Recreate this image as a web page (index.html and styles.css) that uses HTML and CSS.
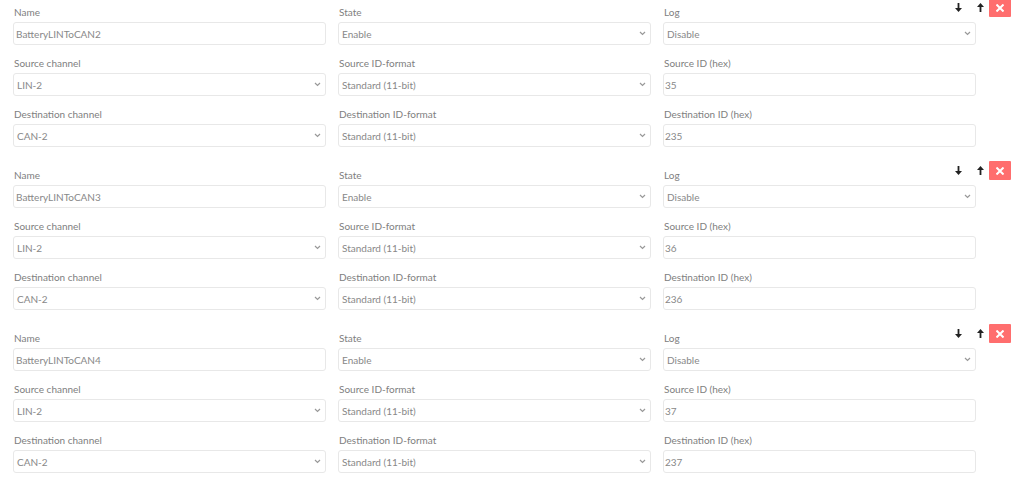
FILE: index.html
```html
<!DOCTYPE html>
<html>
<head>
<meta charset="utf-8">
<link rel="stylesheet" href="styles.css">
</head>
<body>
<div class="page">

  <section class="block">
    <div class="actions">
      <span class="arrow"><svg width="7" height="9" viewBox="0 0 7 9"><path d="M2.6 0h1.8v5H7L3.5 9 0 5h2.6z" fill="#222"/></svg></span>
      <span class="arrow"><svg width="7" height="9" viewBox="0 0 7 9"><path d="M2.6 9h1.8V4H7L3.5 0 0 4h2.6z" fill="#222"/></svg></span>
      <span class="remove"><svg width="8" height="8" viewBox="0 0 8 8"><path d="M1.2 1.2l5.6 5.6M6.8 1.2l-5.6 5.6" stroke="#fff" stroke-width="2" stroke-linecap="square"/></svg></span>
    </div>
    <div class="grid">
      <div class="field"><div class="label">Name</div><div class="control">BatteryLINToCAN2</div></div>
      <div class="field"><div class="label">State</div><div class="control select">Enable<svg class="chev" width="7" height="5" viewBox="0 0 7 5"><path d="M1 1l2.5 2.5L6 1" stroke="#999" stroke-width="1.2" fill="none"/></svg></div></div>
      <div class="field"><div class="label">Log</div><div class="control select">Disable<svg class="chev" width="7" height="5" viewBox="0 0 7 5"><path d="M1 1l2.5 2.5L6 1" stroke="#999" stroke-width="1.2" fill="none"/></svg></div></div>
      <div class="field"><div class="label">Source channel</div><div class="control select">LIN-2<svg class="chev" width="7" height="5" viewBox="0 0 7 5"><path d="M1 1l2.5 2.5L6 1" stroke="#999" stroke-width="1.2" fill="none"/></svg></div></div>
      <div class="field"><div class="label">Source ID-format</div><div class="control select">Standard (11-bit)<svg class="chev" width="7" height="5" viewBox="0 0 7 5"><path d="M1 1l2.5 2.5L6 1" stroke="#999" stroke-width="1.2" fill="none"/></svg></div></div>
      <div class="field"><div class="label">Source ID (hex)</div><div class="control num">35</div></div>
      <div class="field"><div class="label">Destination channel</div><div class="control select">CAN-2<svg class="chev" width="7" height="5" viewBox="0 0 7 5"><path d="M1 1l2.5 2.5L6 1" stroke="#999" stroke-width="1.2" fill="none"/></svg></div></div>
      <div class="field"><div class="label">Destination ID-format</div><div class="control select">Standard (11-bit)<svg class="chev" width="7" height="5" viewBox="0 0 7 5"><path d="M1 1l2.5 2.5L6 1" stroke="#999" stroke-width="1.2" fill="none"/></svg></div></div>
      <div class="field"><div class="label">Destination ID (hex)</div><div class="control num">235</div></div>
    </div>
  </section>

  <section class="block">
    <div class="actions">
      <span class="arrow"><svg width="7" height="9" viewBox="0 0 7 9"><path d="M2.6 0h1.8v5H7L3.5 9 0 5h2.6z" fill="#222"/></svg></span>
      <span class="arrow"><svg width="7" height="9" viewBox="0 0 7 9"><path d="M2.6 9h1.8V4H7L3.5 0 0 4h2.6z" fill="#222"/></svg></span>
      <span class="remove"><svg width="8" height="8" viewBox="0 0 8 8"><path d="M1.2 1.2l5.6 5.6M6.8 1.2l-5.6 5.6" stroke="#fff" stroke-width="2" stroke-linecap="square"/></svg></span>
    </div>
    <div class="grid">
      <div class="field"><div class="label">Name</div><div class="control">BatteryLINToCAN3</div></div>
      <div class="field"><div class="label">State</div><div class="control select">Enable<svg class="chev" width="7" height="5" viewBox="0 0 7 5"><path d="M1 1l2.5 2.5L6 1" stroke="#999" stroke-width="1.2" fill="none"/></svg></div></div>
      <div class="field"><div class="label">Log</div><div class="control select">Disable<svg class="chev" width="7" height="5" viewBox="0 0 7 5"><path d="M1 1l2.5 2.5L6 1" stroke="#999" stroke-width="1.2" fill="none"/></svg></div></div>
      <div class="field"><div class="label">Source channel</div><div class="control select">LIN-2<svg class="chev" width="7" height="5" viewBox="0 0 7 5"><path d="M1 1l2.5 2.5L6 1" stroke="#999" stroke-width="1.2" fill="none"/></svg></div></div>
      <div class="field"><div class="label">Source ID-format</div><div class="control select">Standard (11-bit)<svg class="chev" width="7" height="5" viewBox="0 0 7 5"><path d="M1 1l2.5 2.5L6 1" stroke="#999" stroke-width="1.2" fill="none"/></svg></div></div>
      <div class="field"><div class="label">Source ID (hex)</div><div class="control num">36</div></div>
      <div class="field"><div class="label">Destination channel</div><div class="control select">CAN-2<svg class="chev" width="7" height="5" viewBox="0 0 7 5"><path d="M1 1l2.5 2.5L6 1" stroke="#999" stroke-width="1.2" fill="none"/></svg></div></div>
      <div class="field"><div class="label">Destination ID-format</div><div class="control select">Standard (11-bit)<svg class="chev" width="7" height="5" viewBox="0 0 7 5"><path d="M1 1l2.5 2.5L6 1" stroke="#999" stroke-width="1.2" fill="none"/></svg></div></div>
      <div class="field"><div class="label">Destination ID (hex)</div><div class="control num">236</div></div>
    </div>
  </section>

  <section class="block">
    <div class="actions">
      <span class="arrow"><svg width="7" height="9" viewBox="0 0 7 9"><path d="M2.6 0h1.8v5H7L3.5 9 0 5h2.6z" fill="#222"/></svg></span>
      <span class="arrow"><svg width="7" height="9" viewBox="0 0 7 9"><path d="M2.6 9h1.8V4H7L3.5 0 0 4h2.6z" fill="#222"/></svg></span>
      <span class="remove"><svg width="8" height="8" viewBox="0 0 8 8"><path d="M1.2 1.2l5.6 5.6M6.8 1.2l-5.6 5.6" stroke="#fff" stroke-width="2" stroke-linecap="square"/></svg></span>
    </div>
    <div class="grid">
      <div class="field"><div class="label">Name</div><div class="control">BatteryLINToCAN4</div></div>
      <div class="field"><div class="label">State</div><div class="control select">Enable<svg class="chev" width="7" height="5" viewBox="0 0 7 5"><path d="M1 1l2.5 2.5L6 1" stroke="#999" stroke-width="1.2" fill="none"/></svg></div></div>
      <div class="field"><div class="label">Log</div><div class="control select">Disable<svg class="chev" width="7" height="5" viewBox="0 0 7 5"><path d="M1 1l2.5 2.5L6 1" stroke="#999" stroke-width="1.2" fill="none"/></svg></div></div>
      <div class="field"><div class="label">Source channel</div><div class="control select">LIN-2<svg class="chev" width="7" height="5" viewBox="0 0 7 5"><path d="M1 1l2.5 2.5L6 1" stroke="#999" stroke-width="1.2" fill="none"/></svg></div></div>
      <div class="field"><div class="label">Source ID-format</div><div class="control select">Standard (11-bit)<svg class="chev" width="7" height="5" viewBox="0 0 7 5"><path d="M1 1l2.5 2.5L6 1" stroke="#999" stroke-width="1.2" fill="none"/></svg></div></div>
      <div class="field"><div class="label">Source ID (hex)</div><div class="control num">37</div></div>
      <div class="field"><div class="label">Destination channel</div><div class="control select">CAN-2<svg class="chev" width="7" height="5" viewBox="0 0 7 5"><path d="M1 1l2.5 2.5L6 1" stroke="#999" stroke-width="1.2" fill="none"/></svg></div></div>
      <div class="field"><div class="label">Destination ID-format</div><div class="control select">Standard (11-bit)<svg class="chev" width="7" height="5" viewBox="0 0 7 5"><path d="M1 1l2.5 2.5L6 1" stroke="#999" stroke-width="1.2" fill="none"/></svg></div></div>
      <div class="field"><div class="label">Destination ID (hex)</div><div class="control num">237</div></div>
    </div>
  </section>

</div>
</body>
</html>
```

FILE: styles.css
```css
* { box-sizing: border-box; }
html, body { margin: 0; padding: 0; background: #fff; }
body {
  font-family: Lato, "Open Sans", "Liberation Sans", sans-serif;
  font-size: 10px;
  color: #808080;
  overflow: hidden;
}
.page {
  padding: 4px 0 0 13px;
  width: 1024px;
}
.block {
  position: relative;
  margin-bottom: 10px;
}
.grid {
  display: grid;
  grid-template-columns: 313px 313px 313px;
  column-gap: 12px;
}
.field {
  display: flex;
  flex-direction: column;
  margin-bottom: 10px;
}
.label {
  line-height: 16px;
  height: 16px;
  margin-bottom: 2px;
  padding-left: 1px;
  color: #808080;
}
.control {
  height: 23px;
  border: 1px solid #e8e8e8;
  border-radius: 3px;
  display: flex;
  align-items: center;
  padding: 0 2px;
  color: #888;
  background: #fff;
}
.control.select { padding-left: 3px; justify-content: space-between; padding-right: 4px; }
.control.num { padding-left: 1px; }
.chev { flex: none; }
.actions {
  position: absolute;
  top: -6px;
  right: 13px;
  display: flex;
  align-items: center;
}
.arrow {
  width: 22px;
  height: 19px;
  display: flex;
  align-items: center;
  justify-content: center;
}
.remove {
  width: 22px;
  height: 19px;
  background: #ff6e6e;
  border-radius: 1px;
  display: flex;
  align-items: center;
  justify-content: center;
  margin-left: -2px;
}
```
